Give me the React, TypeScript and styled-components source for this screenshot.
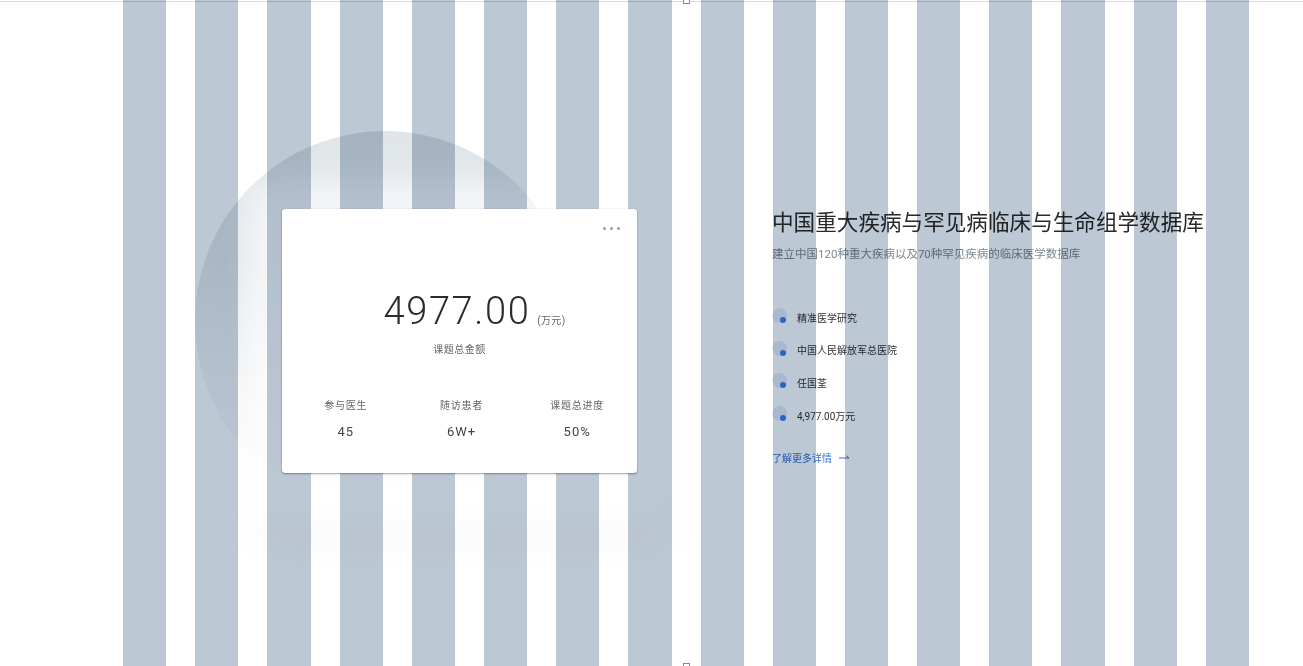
import React from "react";
import styled, { createGlobalStyle } from "styled-components";

const GlobalStyle = createGlobalStyle`
  html, body { margin: 0; padding: 0; background: #ffffff; overflow: hidden; }
  body { font-family: Roboto, "Noto Sans CJK SC", sans-serif; color: #333; }
  * { box-sizing: border-box; }
`;

const Page = styled.div`
  position: relative;
  width: 100%;
  height: 666px;
  padding-top: 1px;
  background: #fff;
`;

const Frame = styled.div`
  height: 665px;
  border-top: 1px solid #d9d9d9;
`;

const Content = styled.div`
  display: flex;
  align-items: stretch;
  gap: 29px;
  width: 1126px;
  height: 100%;
  margin-left: 123px;
`;

const Visual = styled.section`
  position: relative;
  flex: 0 0 548px;
  display: flex;
  align-items: center;
  padding-left: 159px;
  padding-top: 14px;
`;

const Halo = styled.div`
  position: absolute;
  left: 72px;
  top: 129px;
  width: 380px;
  height: 380px;
  border-radius: 50%;
  background: linear-gradient(180deg, #e0e5e9 0%, #e7ebee 35%, rgba(241, 243, 245, 0.6) 70%, rgba(255, 255, 255, 0) 100%);
`;

const Glow = styled.div`
  position: absolute;
  left: 125px;
  top: 178px;
  width: 425px;
  height: 345px;
  border-radius: 30px;
  background: rgba(255, 255, 255, 0.55);
  box-shadow: 0 16px 30px rgba(0, 0, 0, 0.035);
  filter: blur(14px);
`;

const Card = styled.div`
  position: relative;
  z-index: 1;
  width: 355px;
  height: 264px;
  background: #ffffff;
  border-radius: 3px;
  box-shadow: 0 1px 2px rgba(0, 0, 0, 0.35), 0 0 1px rgba(0, 0, 0, 0.2);
  display: flex;
  flex-direction: column;
  align-items: center;
  padding-top: 80px;
`;

const More = styled.div`
  position: absolute;
  top: 18px;
  right: 17px;
  display: flex;
  gap: 4px;
`;

const Dot = styled.span`
  width: 3px;
  height: 3px;
  border-radius: 50%;
  background: #9a9a9a;
`;

const Amount = styled.div`
  display: flex;
  align-items: baseline;
  gap: 7px;
  margin-left: 30px;
`;

const Big = styled.span`
  font-family: Roboto, sans-serif;
  font-weight: 300;
  font-size: 38px;
  letter-spacing: 1.6px;
  color: #2b2b2b;
  line-height: 44px;
`;

const Unit = styled.span`
  font-size: 10px;
  color: #666;
  letter-spacing: 0.3px;
`;

const Caption = styled.div`
  margin-top: 8px;
  font-size: 10px;
  color: #666;
  letter-spacing: 0.5px;
`;

const Stats = styled.div`
  display: grid;
  grid-template-columns: repeat(3, 1fr);
  width: 100%;
  padding: 0 2px 0 6px;
  margin-top: 43px;
`;

const Stat = styled.div`
  display: flex;
  flex-direction: column;
  align-items: center;
  gap: 11px;
`;

const StatLabel = styled.div`
  font-size: 10px;
  color: #666;
  letter-spacing: 0.8px;
  line-height: 14px;
`;

const StatValue = styled.div`
  font-size: 13px;
  color: #444;
  letter-spacing: 1px;
  line-height: 16px;
`;

const Info = styled.section`
  flex: 1;
  display: flex;
  flex-direction: column;
  justify-content: flex-start;
  padding-left: 72px;
  padding-top: 205px;
`;

const Title = styled.h1`
  margin: 0;
  font-family: "Noto Sans CJK SC", sans-serif;
  font-weight: 400;
  font-size: 21.6px;
  line-height: 28px;
  color: #2a2a2a;
  white-space: nowrap;
`;

const Subtitle = styled.p`
  margin: 11px 0 0;
  font-family: Roboto, "Noto Sans CJK SC", sans-serif;
  font-size: 11.5px;
  line-height: 16px;
  color: #7d8791;
  white-space: nowrap;
`;

const List = styled.ul`
  list-style: none;
  margin: 48px 0 0;
  padding: 0;
  display: flex;
  flex-direction: column;
  gap: 18.7px;
`;

const Item = styled.li`
  display: flex;
  align-items: center;
  gap: 10px;
  height: 14px;
  font-size: 10px;
  color: #333;
`;

const Bullet = styled.span`
  position: relative;
  flex: 0 0 15px;
  width: 15px;
  height: 15px;
  margin-top: -3px;
  border-radius: 50%;
  background: rgba(70, 115, 200, 0.14);
  &::after {
    content: "";
    position: absolute;
    left: 8px;
    top: 9px;
    width: 6px;
    height: 6px;
    border-radius: 50%;
    background: #3a7ef0;
  }
`;

const Link = styled.a`
  margin-top: 28px;
  display: flex;
  align-items: center;
  gap: 7px;
  font-size: 10px;
  color: #2f6fd6;
  text-decoration: none;
`;

const Stripes = styled.div`
  position: absolute;
  top: 0;
  left: 123px;
  width: 1126px;
  height: 100%;
  display: grid;
  grid-template-columns: repeat(16, 1fr);
  gap: 29px;
  pointer-events: none;
  mix-blend-mode: multiply;
`;

const Stripe = styled.div`
  background: #bcc8d4;
`;

const Handle = styled.div<{ $bottom?: boolean }>`
  position: absolute;
  left: 683px;
  ${(p) => (p.$bottom ? "bottom: -4px;" : "top: -3px;")}
  width: 7px;
  height: 7px;
  background: #fff;
  border: 1px solid #8a8a8a;
`;

const items = ["精准医学研究", "中国人民解放军总医院", "任国荃", "4,977.00万元"];

export default function App() {
  return (
    <>
      <GlobalStyle />
      <Page>
        <Frame>
          <Content>
            <Visual>
              <Halo />
              <Glow />
              <Card>
                <More>
                  <Dot />
                  <Dot />
                  <Dot />
                </More>
                <Amount>
                  <Big>4977.00</Big>
                  <Unit>(万元)</Unit>
                </Amount>
                <Caption>课题总金额</Caption>
                <Stats>
                  <Stat>
                    <StatLabel>参与医生</StatLabel>
                    <StatValue>45</StatValue>
                  </Stat>
                  <Stat>
                    <StatLabel>随访患者</StatLabel>
                    <StatValue>6W+</StatValue>
                  </Stat>
                  <Stat>
                    <StatLabel>课题总进度</StatLabel>
                    <StatValue>50%</StatValue>
                  </Stat>
                </Stats>
              </Card>
            </Visual>
            <Info>
              <Title>中国重大疾病与罕见病临床与生命组学数据库</Title>
              <Subtitle>建立中国120种重大疾病以及70种罕见疾病的临床医学数据库</Subtitle>
              <List>
                {items.map((t) => (
                  <Item key={t}>
                    <Bullet />
                    {t}
                  </Item>
                ))}
              </List>
              <Link href="#">
                了解更多详情
                <svg width="11" height="6" viewBox="0 0 11 6" fill="none">
                  <path d="M0 3h10M7.5 0.8L10 3" stroke="#2f6fd6" strokeWidth="1" />
                </svg>
              </Link>
            </Info>
          </Content>
        </Frame>
        <Stripes>
          {Array.from({ length: 16 }).map((_, i) => (
            <Stripe key={i} />
          ))}
        </Stripes>
        <Handle />
        <Handle $bottom />
      </Page>
    </>
  );
}
